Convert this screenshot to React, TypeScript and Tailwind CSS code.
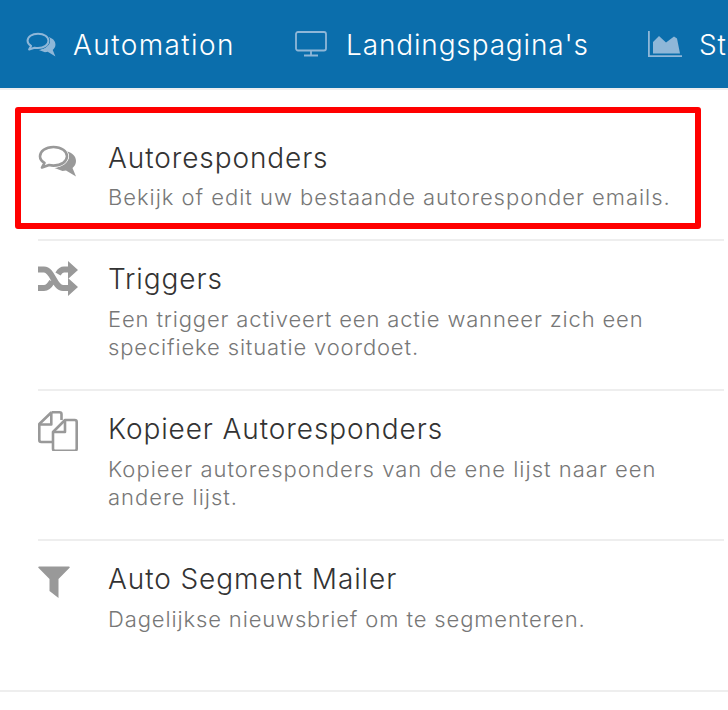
function CommentsIcon({ className }: { className?: string }) {
  return (
    <svg className={className} viewBox="0 0 40 32" fill="none">
      <mask id="bubble-cut">
        <rect width="40" height="32" fill="white" />
        <path d="M15.500 0C24.500 0 31 5.300 31 11.300s-6.500 11.300-15.500 11.300c-1.500 0-3-.2-4.400-.5L1 25l4-6.500C1.500 16.500 0 13.900 0 11.300 0 5.300 6.500 0 15.500 0z" fill="black" />
      </mask>
      <path d="M28 6c6 1.500 10 5 10 10 0 3-1.300 5.300-3.500 7l3.500 8.500-10-6-3.500.5-8-3C26 22 36 12 28 6z" fill="currentColor" mask="url(#bubble-cut)" />
      <path d="M15.500 2C23.500 2 29 6.200 29 11.300s-5.500 9.300-13.500 9.300c-1.500 0-3-.2-4.400-.5L4 22.500l2.500-4.600C3.500 16.200 2 13.900 2 11.300 2 6.200 7.500 2 15.500 2z" stroke="currentColor" strokeWidth="2.600" strokeLinejoin="round" />
    </svg>
  );
}

function DesktopIcon({ className }: { className?: string }) {
  return (
    <svg className={className} viewBox="0 0 32 26" fill="none" stroke="currentColor">
      <rect x="1" y="1" width="30" height="18.500" rx="2" strokeWidth="1.800" />
      <path d="M16 20v4" strokeWidth="1.800" />
      <path d="M9 24.500h14" strokeWidth="2" />
    </svg>
  );
}

function AreaIcon({ className }: { className?: string }) {
  return (
    <svg className={className} viewBox="0 0 34 26" fill="currentColor">
      <path d="M0 0h1.800v24.200H34V26H0z" />
      <path d="M5 22.500V11l6-6 7 6.500 8-6 3 2 3 15z" />
    </svg>
  );
}

function ShuffleIcon({ className }: { className?: string }) {
  return (
    <svg className={className} viewBox="0 0 40 35" fill="none">
      <path d="M0 8.500h6C15 8.500 16 27 25 27h6M0 27h6c3.500 0 6-3 8-6.500M20 13c1.500-2.500 3-4.500 6-4.500h5" stroke="currentColor" strokeWidth="6" />
      <path d="M30 0l10 9-10 9zM30 17l10 9-10 9z" fill="currentColor" />
    </svg>
  );
}

function CopyIcon({ className }: { className?: string }) {
  return (
    <svg className={className} viewBox="0 0 40 40" fill="none" stroke="currentColor" strokeWidth="2.600" strokeLinejoin="round">
      <path d="M13.500 1.300h8a2 2 0 0 1 2 2V9" />
      <path d="M13.500 1.300 1.300 13v16a2 2 0 0 0 2 2H15" />
      <path d="M1.300 13.500h12V1.500" />
      <path d="M27 9h9.700a2 2 0 0 1 2 2v26.700a2 2 0 0 1-2 2H17a2 2 0 0 1-2-2V21z" />
      <path d="M15 21h12V9" />
    </svg>
  );
}

function FunnelIcon({ className }: { className?: string }) {
  return (
    <svg className={className} viewBox="0 0 32 32" fill="currentColor">
      <path d="M1 0.500h30a.8.800 0 0 1 .6 1.300L20.500 13v19l-9-7V13L.4 1.800A.8.800 0 0 1 1 .5z" />
    </svg>
  );
}

const navItems = [
  { label: "Automation", Icon: CommentsIcon, icon: "h-[25px] w-[31px]", text: "tracking-[1.400px]", gap: "gap-[16px]", width: "w-[269px]" },
  { label: "Landingspagina's", Icon: DesktopIcon, icon: "h-[26px] w-[32px]", text: "tracking-[0.850px]", gap: "gap-[19px]", width: "w-[353px]" },
  { label: "Statistieken", Icon: AreaIcon, icon: "h-[26px] w-[34px]", text: "tracking-[0.900px]", gap: "gap-[17px]", width: "w-[200px]" },
];

const items = [
  { title: "Autoresponders", lines: ["Bekijk of edit uw bestaande autoresponder emails."], Icon: CommentsIcon, icon: "mt-[5px] h-[32px] w-[40px]", box: "h-[151px] border-b-2 pt-[50px]", gap: "mt-[7px] tracking-[0.970px]" },
  { title: "Triggers", lines: ["Een trigger activeert een actie wanneer zich een", "specifieke situatie voordoet."], Icon: ShuffleIcon, icon: "h-[35px] w-[40px]", box: "h-[150px] border-b-2 pt-[20px]", gap: "mt-[8px] tracking-[0.850px]" },
  { title: "Kopieer Autoresponders", lines: ["Kopieer autoresponders van de ene lijst naar een", "andere lijst."], Icon: CopyIcon, icon: "h-[40px] w-[40px]", box: "h-[150px] border-b-2 pt-[20px]", gap: "mt-[8px] tracking-[1px]" },
  { title: "Auto Segment Mailer", lines: ["Dagelijkse nieuwsbrief om te segmenteren."], Icon: FunnelIcon, icon: "mt-[5px] h-[32px] w-[32px]", box: "h-[149px] pt-[20px]", gap: "mt-[8px] tracking-[0.870px]" },
];

export default function App() {
  return (
    <div className="h-[710px] w-[728px] overflow-hidden bg-white font-['Inter',sans-serif] font-light">
      <nav className="flex h-[90px] items-center overflow-hidden border-b-2 border-[#eeeef0] bg-[#0b6eac] pl-[26px] text-[28px] text-white">
        {navItems.map(({ label, Icon, icon, text, gap, width }) => (
          <div key={label} className={`flex shrink-0 items-center ${gap} ${width}`}>
            <Icon className={`${icon} shrink-0 text-[#8fb7d8]`} />
            <span className={`mt-[2px] ${text}`}>{label}</span>
          </div>
        ))}
      </nav>

      <ul className="relative border-b-2 border-[#eeeeee]">
        {items.map(({ title, lines, Icon, icon, box, gap }) => (
          <li key={title} className={`ml-[38px] mr-[4px] flex border-[#eeeeee] ${box}`}>
            <div className="w-[70px] shrink-0">
              <Icon className={`${icon} text-[#999999]`} />
            </div>
            <div>
              <h3 className="text-[28px] leading-[36px] tracking-[0.900px] text-[#333333]">{title}</h3>
              <div className={`${gap} text-[22px] leading-[28px] text-[#777777]`}>
                {lines.map((line) => (
                  <p key={line}>{line}</p>
                ))}
              </div>
            </div>
          </li>
        ))}
        <div className="absolute left-[15px] top-[17px] h-[122px] w-[686px] rounded-[3px] border-[6px] border-[#ff0000]" />
      </ul>
    </div>
  );
}
